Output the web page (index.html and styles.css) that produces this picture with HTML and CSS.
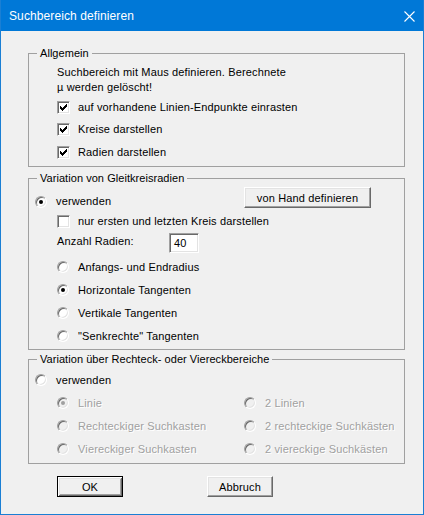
FILE: index.html
```html
<!DOCTYPE html>
<html lang="de">
<head>
<meta charset="utf-8">
<title>Suchbereich definieren</title>
<link rel="stylesheet" href="styles.css">
</head>
<body>
<div class="window">
  <div class="titlebar">
    <span class="title">Suchbereich definieren</span>
    <svg class="close" width="11" height="11" viewBox="0 0 11 11"><path d="M0.5 0.5L10.5 10.5M10.5 0.5L0.5 10.5" stroke="#fff" stroke-width="1.1" fill="none"/></svg>
  </div>
  <div class="content">
    <fieldset class="group g1">
      <legend>Allgemein</legend>
      <p class="info">Suchbereich mit Maus definieren. Berechnete<br>µ werden gelöscht!</p>
      <div class="row cb r1"><span class="check"><svg width="11" height="11" viewBox="0 0 11 11"><polygon points="2,4 4,6 9,1 9,4 4,9 2,7" fill="#000" shape-rendering="crispEdges"/></svg></span><span>auf vorhandene Linien-Endpunkte einrasten</span></div>
      <div class="row cb r2"><span class="check"><svg width="11" height="11" viewBox="0 0 11 11"><polygon points="2,4 4,6 9,1 9,4 4,9 2,7" fill="#000" shape-rendering="crispEdges"/></svg></span><span>Kreise darstellen</span></div>
      <div class="row cb r3"><span class="check"><svg width="11" height="11" viewBox="0 0 11 11"><polygon points="2,4 4,6 9,1 9,4 4,9 2,7" fill="#000" shape-rendering="crispEdges"/></svg></span><span>Radien darstellen</span></div>
    </fieldset>

    <fieldset class="group g2">
      <legend>Variation von Gleitkreisradien</legend>
      <div class="toprow">
        <div class="row rd use"><span class="radio on"></span><span>verwenden</span></div>
        <button class="btn hand">von Hand definieren</button>
      </div>
      <div class="row cb nur"><span class="check"></span><span>nur ersten und letzten Kreis darstellen</span></div>
      <div class="anzahl"><span class="alabel">Anzahl Radien:</span><span class="edit">40</span></div>
      <div class="radios">
        <div class="row rd r23"><span class="radio"></span><span>Anfangs- und Endradius</span></div>
        <div class="row rd r23"><span class="radio on"></span><span>Horizontale Tangenten</span></div>
        <div class="row rd r23"><span class="radio"></span><span>Vertikale Tangenten</span></div>
        <div class="row rd r23"><span class="radio"></span><span>"Senkrechte" Tangenten</span></div>
      </div>
    </fieldset>

    <fieldset class="group g3">
      <legend>Variation über Rechteck- oder Viereckbereiche</legend>
      <div class="row rd use3"><span class="radio"></span><span>verwenden</span></div>
      <div class="grid">
        <div class="row rd r23 dis"><span class="radio on"></span><span>Linie</span></div>
        <div class="row rd r23 dis"><span class="radio"></span><span>2 Linien</span></div>
        <div class="row rd r23 dis"><span class="radio"></span><span>Rechteckiger Suchkasten</span></div>
        <div class="row rd r23 dis"><span class="radio"></span><span>2 rechteckige Suchkästen</span></div>
        <div class="row rd r23 dis"><span class="radio"></span><span>Viereckiger Suchkasten</span></div>
        <div class="row rd r23 dis"><span class="radio"></span><span>2 viereckige Suchkästen</span></div>
      </div>
    </fieldset>

    <div class="buttons">
      <button class="btn default">OK</button>
      <button class="btn">Abbruch</button>
    </div>
  </div>
</div>
</body>
</html>
```

FILE: styles.css
```css
* { box-sizing: border-box; }
html, body { margin: 0; padding: 0; }
body {
  font-family: "Liberation Sans", Arial, sans-serif;
  font-size: 11px;
  letter-spacing: 0.15px;
  color: #000;
  background: #f0f0f0;
}
.window {
  width: 424px;
  height: 515px;
  background: #f0f0f0;
  border: 1px solid #1a7fd4;
  border-top: 0;
}
.titlebar {
  height: 31px;
  background: #0078d7;
  display: flex;
  align-items: center;
  justify-content: space-between;
  padding: 0 8px 0 8px;
}
.title {
  color: #fff;
  font-family: "Liberation Sans", Arial, sans-serif;
  font-size: 12px;
  letter-spacing: 0.1px;
}
.close { display: block; margin-top: 1px; }
.content { padding-top: 16px; }

.group {
  margin: 0 0 0 27px;
  width: 377px;
  min-width: 0;
  border: 1px solid #a0a0a0;
  padding: 0 0 0 6px;
}
.group legend {
  padding: 0 3px;
  margin-left: 2px;
  line-height: 13px;
  letter-spacing: 0.05px;
}
.g1 { padding-top: 5px; padding-bottom: 3px; }
.g2 { margin-top: 5px; padding-top: 2px; padding-bottom: 2px; }
.g3 { margin-top: 3px; padding-top: 3px; padding-bottom: 3px; }

.info { margin: 0 0 0 22px; line-height: 15px; }

.row { display: flex; align-items: center; }
.row.cb { gap: 8px; height: 22px; margin-left: 22px; }
.row.rd { gap: 9px; }
.r1 { margin-top: 1px; }
.r3 { margin-top: 1px; }

.check {
  width: 13px;
  height: 13px;
  flex: none;
  border: 1px solid;
  border-color: #a0a0a0 #fff #fff #a0a0a0;
  box-shadow: inset 1px 1px #696969, inset -1px -1px #e3e3e3;
  background: #fff;
  display: flex;
}
.check svg { display: block; }

.radio {
  width: 12px;
  height: 12px;
  flex: none;
  border-radius: 50%;
  border: 1px solid;
  border-color: #a0a0a0 #fff #fff #a0a0a0;
  box-shadow: inset 1px 1px #696969, inset -1px -1px #e3e3e3;
  background: #fff;
  display: flex;
  align-items: center;
  justify-content: center;
}
.radio.on::after {
  content: "";
  width: 4px;
  height: 4px;
  border-radius: 50%;
  background: #000;
}
.dis { color: #a0a0a0; text-shadow: 1px 1px 0 #fff; }
.dis .radio { background: #f0f0f0; }
.dis .radio.on::after { background: #a0a0a0; }

.toprow { display: flex; align-items: flex-start; height: 21px; }
.use { margin-top: 8px; line-height: 13px; }
.hand { margin-left: auto; margin-right: 33px; width: 127px; }
.nur { margin-top: 2px; }
.anzahl { display: flex; align-items: flex-start; margin: 1px 0 0 22px; height: 20px; }
.alabel { width: 112px; padding-top: 2px; line-height: 13px; }
.edit {
  width: 30px;
  height: 20px;
  background: #fff;
  border: 1px solid;
  border-color: #a0a0a0 #fff #fff #a0a0a0;
  box-shadow: inset 1px 1px #696969, inset -1px -1px #e3e3e3;
  padding: 3px 0 0 4px;
  line-height: 13px;
}
.radios { margin: 2px 0 0 22px; }
.r23 { height: 23px; }
.use3 { height: 22px; }
.grid {
  display: grid;
  grid-template-columns: 187px auto;
  margin-left: 22px;
}

.btn {
  font-family: "Liberation Sans", Arial, sans-serif;
  font-size: 11px;
  letter-spacing: 0.15px;
  color: #000;
  height: 21px;
  padding: 0;
  background: #f0f0f0;
  border: 1px solid;
  border-color: #fff #696969 #696969 #fff;
  box-shadow: inset -1px -1px #a0a0a0, inset 1px 1px #e3e3e3;
  border-radius: 0;
}
.btn.default {
  border: 1px solid #000;
  box-shadow: inset 1px 1px #fff, inset -1px -1px #696969, inset 2px 2px #e3e3e3, inset -2px -2px #a0a0a0;
}
.buttons {
  display: flex;
  gap: 84px;
  margin-top: 12px;
  padding-left: 56px;
}
.buttons .btn { width: 66px; }
```
